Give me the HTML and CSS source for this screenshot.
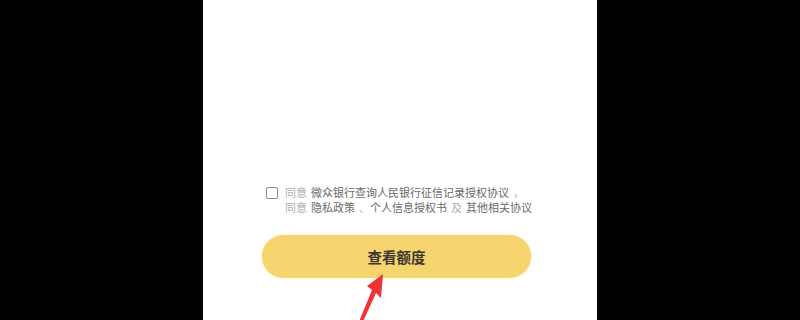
FILE: index.html
```html
<html>

<head>
    <meta charset="utf-8">
    <link rel="stylesheet" href="styles.css">
</head>

<body>
    <div class="panel">
        <div class="agree">
            <span class="check"></span>
            <div class="agree-text">
                <div class="line">
                    <span class="muted">同意</span>
                    <span>微众银行查询人民银行征信记录授权协议</span>
                    <span class="muted">，</span>
                </div>
                <div class="line">
                    <span class="muted">同意</span>
                    <span>隐私政策</span>
                    <span><span class="muted">、</span>个人信息授权书</span>
                    <span class="muted">及</span>
                    <span>其他相关协议</span>
                </div>
            </div>
        </div>
        <div class="btn">查看额度</div>
        <svg class="arrow" width="40" height="60" viewBox="0 0 40 60">
            <polygon points="35,10 33,34 28,29 14,60 10,60 24,26 19,22" fill="#ee3535" />
        </svg>
    </div>
</body>

</html>
```

FILE: styles.css
```css
* {
    margin: 0;
    box-sizing: border-box;
}

body {
    background: #000;
    width: 800px;
    height: 320px;
    overflow: hidden;
    font-family: "Noto Sans CJK SC", "Noto Sans", sans-serif;
}

.panel {
    position: relative;
    width: 394px;
    height: 320px;
    margin-left: 203px;
    background: #fff;
    padding-top: 185px;
}

.agree {
    display: flex;
    align-items: flex-start;
    margin-left: 63px;
    gap: 7px;
}

.check {
    width: 12px;
    height: 12px;
    margin-top: 2px;
    border: 1px solid #8e8e8e;
    border-radius: 2px;
    flex-shrink: 0;
}

.agree-text {
    font-size: 11px;
    line-height: 15px;
    color: #6a6a6a;
    white-space: nowrap;
}

.line {
    display: flex;
    gap: 4px;
}

.muted {
    color: #b0b0b0;
}

.btn {
    width: 269px;
    height: 43px;
    margin-top: 20px;
    margin-left: 59px;
    border-radius: 22px;
    background: #f6d56f;
    box-shadow: 0 0 3px rgba(246, 213, 111, 0.6);
    color: #3b3630;
    font-size: 14.5px;
    font-weight: bold;
    display: flex;
    align-items: center;
    justify-content: center;
}

.arrow {
    position: absolute;
    left: 145px;
    top: 264px;
}
```
